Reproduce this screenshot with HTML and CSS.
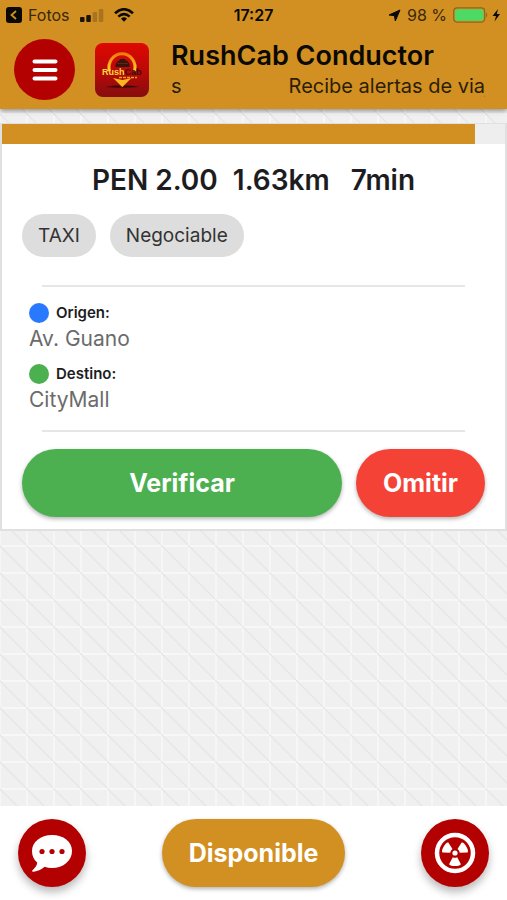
FILE: index.html
```html
<!DOCTYPE html>
<html lang="es">
<head>
<meta charset="utf-8">
<meta name="viewport" content="width=device-width, initial-scale=1">
<title>RushCab Conductor</title>
<link rel="stylesheet" href="styles.css">
</head>
<body>
<header class="header">
  <div class="status">
    <div class="status-side">
      <a class="back" href="#">
        <svg width="16" height="16" viewBox="0 0 16 16" aria-hidden="true"><rect width="16" height="16" rx="3" fill="#0b0904"/><path d="M10 4 5.500 8 10 12" fill="none" stroke="#d29022" stroke-width="1.800"/></svg>
        <span>Fotos</span>
      </a>
      <svg class="signal" width="24" height="14" viewBox="0 0 24 14" aria-hidden="true"><g fill="#1a1204"><rect x="0" y="9" width="4.500" height="5" rx="1"/><rect x="6.300" y="7" width="4.500" height="7" rx="1"/></g><g fill="#a87420"><rect x="12.600" y="4" width="4.500" height="10" rx="1"/><rect x="18.800" y="1" width="4.500" height="13" rx="1"/></g></svg>
      <svg width="20" height="14" viewBox="0 0 20 14" aria-hidden="true"><g fill="none" stroke="#0b0904" stroke-width="2.500"><path d="M1 5.200Q10-2.800 19 5.200"/><path d="M4.300 8.700Q10 3.500 15.700 8.700"/></g><path d="M7 10.700Q10 8 13 10.700L10 13.800Z" fill="#0b0904"/></svg>
    </div>
    <time class="clock">17:27</time>
    <div class="status-side status-right">
      <svg width="13" height="13" viewBox="0 0 13 13" aria-hidden="true"><path d="M12 1 7.300 12 6.500 6.700 1 6Z" fill="#0b0904" stroke="#0b0904" stroke-linejoin="round"/></svg>
      <span class="charge">98 %</span>
      <svg width="48" height="16" viewBox="0 0 48 16" aria-hidden="true"><rect x=".7" y=".9" width="31" height="14.200" rx="3.500" fill="none" stroke="#8f651b" stroke-width="1.200"/><rect x="2" y="2.200" width="28.400" height="11.600" rx="2" fill="#4cd964"/><path d="M33 5.500q2.500 2.500 0 5Z" fill="#8f651b"/><path d="M45 2 39.500 9H43l-1.500 5.500L47 7h-3.200Z" fill="#0b0904"/></svg>
    </div>
  </div>
  <div class="app-bar">
    <button class="round menu" type="button" aria-label="Menú">
      <svg width="26" height="22" viewBox="0 0 26 22" aria-hidden="true"><path d="M2.500 2.500h21M2.500 11h21M2.500 19.500h21" stroke="#fff" stroke-width="4" stroke-linecap="round"/></svg>
    </button>
    <svg class="logo" width="54" height="54" viewBox="0 0 54 54" role="img" aria-label="RushCab">
      <defs>
        <linearGradient id="red" x2="0" y2="1"><stop stop-color="#df0800"/><stop offset=".55" stop-color="#b80909"/><stop offset="1" stop-color="#850d0d"/></linearGradient>
        <linearGradient id="gold" x2="0" y2="1"><stop stop-color="#f27b09"/><stop offset="1" stop-color="#ffd12a"/></linearGradient>
      </defs>
      <rect width="54" height="54" rx="8" fill="url(#red)"/>
      <path d="M14.500 28a13 13.500 0 1 1 25 0" fill="none" stroke="url(#gold)" stroke-width="3"/>
      <path d="m18 35 9.300 9L36.500 35l-9 2Z" fill="#ffb51c"/>
      <path d="m20.500 21 2.500-3 1.500-.5.500-1.500h5l.5 1.500 2 .5 2 3v3H20.500Z" fill="#34170f"/>
      <path d="M22 20.500h11" stroke="#751c0e"/>
      <path d="M10 44q8-2 14-1.500l3 2 3-2q8-.5 14 1.500-17 1.500-34 0Z" fill="#340b09"/>
      <text class="logo-name" x="7" y="32"><tspan fill="#ffd83a">Rush</tspan><tspan fill="#390f08">Cab</tspan></text>
      <path d="M24 34.500h18" stroke="#f0a11a" stroke-width="1.500" stroke-dasharray="3 1"/>
    </svg>
    <div class="heading">
      <h1 class="title">RushCab Conductor</h1>
      <p class="ticker"><span>s</span><span>Recibe alertas de viajes</span></p>
    </div>
  </div>
</header>

<main class="main">
  <article class="card">
    <progress class="timer" value="94" max="100" aria-label="Tiempo restante"></progress>
    <div class="body">
      <h2 class="summary"><span>PEN 2.00</span><span>1.63km</span><span class="minutes">7min</span></h2>
      <div class="chips"><span class="chip">TAXI</span><span class="chip">Negociable</span></div>
      <hr class="divider">
      <dl class="route">
        <dt class="label"><span class="dot origin"></span>Origen:</dt>
        <dd class="place">Av. Guano</dd>
        <dt class="label"><span class="dot target"></span>Destino:</dt>
        <dd class="place">CityMall</dd>
      </dl>
      <hr class="divider">
      <div class="actions">
        <button class="pill verify" type="button">Verificar</button>
        <button class="pill skip" type="button">Omitir</button>
      </div>
    </div>
  </article>
</main>

<footer class="footer">
  <button class="round fab" type="button" aria-label="Mensajes">
    <svg width="42" height="38" viewBox="0 0 42 38" aria-hidden="true"><path d="M21 1C9.500 1 1 8 1 17c0 5 1.800 8.500 5.200 11.500C6 32 3.500 34 1.300 36.500c-.6.700 0 1.300.8 1.200 5.500-.5 8.500-2.500 11.400-4.900 2.300.8 4.800 1.200 7.500 1.200 11.500 0 20-7.500 20-17S32.500 1 21 1Z" fill="#fff"/><g fill="#b30000"><circle cx="11" cy="17.500" r="2.600"/><circle cx="21" cy="17.500" r="2.600"/><circle cx="31" cy="17.500" r="2.600"/></g></svg>
  </button>
  <button class="pill available" type="button">Disponible</button>
  <button class="round fab" type="button" aria-label="Alerta">
    <svg width="42" height="42" viewBox="-21 -21 42 42" aria-hidden="true"><circle r="18" fill="none" stroke="#fff" stroke-width="4.500"/><g fill="#fff"><circle r="2.600"/><path id="blade" d="M-2.200 4.200Q0 5.300 2.200 4.200L5.800 11Q5.500 13 0 13T-5.800 11Z"/><use href="#blade" transform="rotate(120)"/><use href="#blade" transform="rotate(240)"/></g></svg>
  </button>
</footer>
</body>
</html>
```
FILE: styles.css
```css
:root {
  --gold: #d29022;
  --red: #b30000;
  --green: #4caf50;
}

* {
  box-sizing: border-box;
}

body {
  margin: 0;
  min-height: 100vh;
  display: flex;
  flex-direction: column;
  font-family: Inter, "Liberation Sans", sans-serif;
  color: #1d1d1f;
  background: #fff;
}

button {
  border: 0;
  padding: 0;
  font-family: inherit;
  cursor: pointer;
}

h1, h2, p, dl, dd {
  margin: 0;
}

svg {
  display: block;
  flex: none;
}

.header {
  position: relative;
  background: var(--gold);
  box-shadow: 0 2px 5px rgba(0, 0, 0, 0.4);
  color: #0b0904;
}

.status {
  display: flex;
  align-items: center;
  height: 30px;
  padding: 0 6px;
  font-size: 16px;
}

.status-side {
  flex: 1;
  display: flex;
  align-items: center;
  gap: 10px;
}

.status-right {
  justify-content: flex-end;
  gap: 6px;
}

.back {
  display: flex;
  align-items: center;
  gap: 6px;
  color: #3a2809;
  text-decoration: none;
}

.charge {
  color: #3a2809;
}

.clock {
  font-weight: 600;
}

.app-bar {
  display: flex;
  align-items: center;
  height: 79px;
  padding: 0 22px 0 14px;
}

.round {
  display: flex;
  align-items: center;
  justify-content: center;
  flex: none;
  border-radius: 50%;
  background: var(--red);
}

.menu {
  width: 61px;
  height: 61px;
}

.logo {
  margin: 0 22px 0 20px;
}

.logo-name {
  font: 700 9px "Liberation Sans", sans-serif;
}

.heading {
  flex: 1;
  min-width: 0;
}

.title {
  font-size: 27px;
  line-height: 32px;
  font-weight: 600;
  white-space: nowrap;
}

.ticker {
  display: flex;
  gap: 107px;
  overflow: hidden;
  white-space: nowrap;
  font-size: 20px;
  line-height: 28px;
  color: #2b1d06;
}

.main {
  flex: 1;
  padding-top: 14px;
  background-color: #f0f0f0;
  background-image:
    linear-gradient(45deg, transparent 47%, #e6e6e6 49%, #e6e6e6 51%, transparent 53%),
    linear-gradient(#f7f7f7 2px, transparent 2px),
    linear-gradient(90deg, #f6f6f6 2px, transparent 2px);
  background-size: 27px 27px;
  background-position: -1px 4px;
}

.card {
  border: 2px solid #e0e0e0;
  border-top-width: 1px;
  background: #fff;
}

.timer {
  appearance: none;
  display: block;
  width: 100%;
  height: 20px;
  border: 0;
}

.timer::-webkit-progress-bar {
  background: #eee;
}

.timer::-webkit-progress-value {
  background: var(--gold);
}

.body {
  padding: 20px 20px 12px;
}

.summary {
  display: flex;
  justify-content: center;
  gap: 15px;
  font-size: 28px;
  line-height: 32px;
  font-weight: 600;
  white-space: nowrap;
}

.minutes {
  padding-left: 6px;
}

.chips {
  display: flex;
  gap: 14px;
  margin: 18px 0 28px;
}

.chip {
  padding: 0 16px;
  border-radius: 22px;
  background: #ddd;
  color: #333;
  font-size: 19px;
  line-height: 43px;
}

.divider {
  height: 2px;
  margin: 0 20px;
  border: 0;
  background: #e6e6e6;
}

.route {
  padding: 15px 7px 16px;
}

.label {
  display: flex;
  align-items: center;
  gap: 7px;
  font-size: 15px;
  line-height: 22px;
  font-weight: 600;
}

.dot {
  width: 20px;
  height: 20px;
  border-radius: 50%;
}

.origin {
  background: #2979ff;
}

.target {
  background: var(--green);
}

.place {
  margin-bottom: 10px;
  color: #6b6b6b;
  font-size: 21px;
  line-height: 29px;
}

.place:last-child {
  margin-bottom: 0;
}

.actions {
  display: flex;
  gap: 14px;
  margin-top: 17px;
}

.pill {
  height: 68px;
  border-radius: 34px;
  color: #fff;
  font-size: 25px;
  font-weight: 700;
  box-shadow: 0 2px 4px rgba(0, 0, 0, 0.3);
}

.verify {
  flex: 1;
  background: var(--green);
}

.skip {
  padding: 0 27px;
  background: #f44336;
}

.footer {
  display: flex;
  align-items: center;
  justify-content: space-between;
  padding: 13px 18px;
  background: #fff;
}

.fab {
  width: 68px;
  height: 68px;
  box-shadow: 0 5px 9px rgba(0, 0, 0, 0.28);
}

.available {
  padding: 0 27px;
  background: var(--gold);
}
```
